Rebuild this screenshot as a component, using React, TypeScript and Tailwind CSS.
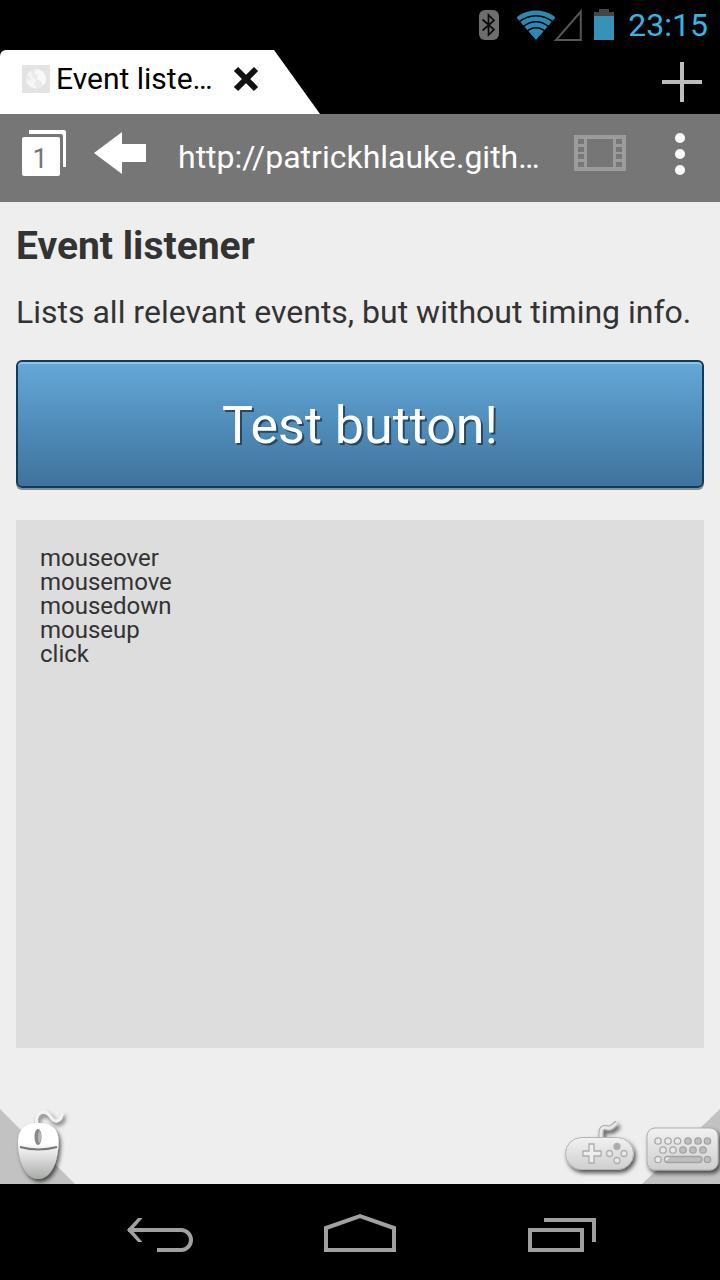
import { useState } from "react";

const EVENTS = ["mouseover", "mousemove", "mousedown", "mouseup", "click"];

function StatusBar() {
  return (
    <header className="flex h-[50px] items-center justify-end pr-3">
      <svg className="h-8 w-5" viewBox="0 0 20 32" aria-label="Bluetooth" role="img">
        <rect x="0" y="1" width="20" height="30" rx="6" fill="#6e6e6e" />
        <path d="M3.500 10.500L15 20.500L9.500 26V6L15 11.500L3.500 21.500" fill="none" stroke="#0a0a0a" strokeWidth="1.700" />
      </svg>
      <svg className="ml-[18px] h-8 w-[38px]" viewBox="0 0 38 32" aria-label="Wi-Fi" role="img">
        <path d="M19 31L-0.500 8.500C10-1 28-1 38.500 8.500Z" fill="#2a8ab4" />
        <g fill="none" stroke="#000" strokeWidth="1.500">
          <path d="M2 13C12 4.500 26 4.500 36 13" />
          <path d="M6 18C14 11 24 11 32 18" />
          <path d="M10 22.500C15 17.500 23 17.500 28 22.500" />
        </g>
      </svg>
      <svg className="-ml-px h-8 w-7" viewBox="0 0 28 32" aria-label="No signal" role="img">
        <path d="M2 31H26.800V2.500Z" fill="none" stroke="#565656" strokeWidth="2" />
      </svg>
      <svg className="ml-3 h-8 w-5" viewBox="0 0 20 32" aria-label="Battery" role="img">
        <path d="M0 3H5V0H15V3H20V7H0Z" fill="#454545" />
        <rect x="0" y="7" width="20" height="24" fill="#3792b8" />
      </svg>
      <time className="ml-3.5 text-[32px] leading-8 text-[#33b5e5]">23:15</time>
    </header>
  );
}

function TabStrip() {
  return (
    <div className="flex h-16 items-stretch justify-between">
      <div className="flex">
        <div className="flex w-[274px] items-center rounded-tl-md bg-white pb-1.5 pl-[22px]">
          <svg className="size-7 shrink-0" viewBox="0 0 28 28" aria-hidden="true">
            <rect width="28" height="28" rx="1" fill="#e3e3e3" />
            <circle cx="14" cy="14" r="10" fill="#ebebeb" />
            <path d="M13 5C18 3 24 8 24 14C24 17 23 19 21 20L19 16L15 14L16 10L13 9Z" fill="#f8f8f8" />
            <path d="M5 9L9 7L10 12L14 15L12 19L15 23C9 24 4 19 4 14L8 16L9 13Z" fill="#f6f6f6" />
          </svg>
          <span className="ml-1.5 grow text-[30px] leading-9 text-black">Event liste…</span>
          <button aria-label="Close tab" className="mr-3.5 flex size-7 items-center justify-center">
            <svg className="size-7" viewBox="0 0 28 28" aria-hidden="true">
              <path d="M4 4L24 24M24 4L4 24" stroke="#111" strokeWidth="6" />
            </svg>
          </button>
        </div>
        <svg className="h-16 w-[46px]" viewBox="0 0 46 64" aria-hidden="true">
          <path d="M0 0L46 64H0Z" fill="#fff" />
        </svg>
      </div>
      <button aria-label="New tab" className="mr-[18px] flex items-center">
        <svg className="size-10" viewBox="0 0 40 40" aria-hidden="true">
          <path d="M20 0V40M0 20H40" stroke="#bdbdbd" strokeWidth="4" />
        </svg>
      </button>
    </div>
  );
}

function Toolbar() {
  return (
    <nav className="flex h-[88px] items-center bg-[#767676] pl-[22px] text-white">
      <button aria-label="Open tabs: 1" className="pb-2.5">
        <svg className="h-12 w-11" viewBox="0 0 44 48" aria-hidden="true">
          <path d="M7 1H42Q44 1 44 3V38H41V7Q41 5 39 5H7Z" fill="#fff" />
          <rect x="0" y="8" width="38" height="39" rx="2" fill="#fff" />
          <text x="18" y="39" textAnchor="middle" fontFamily="Roboto, sans-serif" fontSize="27" fill="#767676">1</text>
        </svg>
      </button>
      <button aria-label="Back" className="ml-7 pb-2.5">
        <svg className="h-11 w-[52px]" viewBox="0 0 52 44" aria-hidden="true">
          <path d="M0 22L28 1V13H52V31H28V43Z" fill="#fff" />
        </svg>
      </button>
      <input
        aria-label="Address"
        defaultValue="http://patrickhlauke.gith…"
        className="ml-8 h-12 min-w-0 flex-1 bg-transparent pb-0.5 text-[32px] outline-none"
      />
      <button aria-label="Video" className="ml-4 pb-2.5">
        <svg className="h-9 w-[52px]" viewBox="0 0 52 36" aria-hidden="true">
          <path
            fillRule="evenodd"
            fill="#9b9b9b"
            d="M0 0H52V36H0ZM13 4V32H39V4ZM4 4V9H10V4ZM4 12V17H10V12ZM4 19V24H10V19ZM4 27V32H10V27ZM42 4V9H48V4ZM42 12V17H48V12ZM42 19V24H48V19ZM42 27V32H48V27Z"
          />
        </svg>
      </button>
      <button aria-label="Menu" className="mr-[34px] ml-12 pb-2">
        <svg className="h-11 w-3" viewBox="0 0 12 44" aria-hidden="true">
          <g fill="#fff">
            <circle cx="6" cy="6" r="5" />
            <circle cx="6" cy="22" r="5" />
            <circle cx="6" cy="38" r="5" />
          </g>
        </svg>
      </button>
    </nav>
  );
}

function Gradients() {
  return (
    <defs>
      <linearGradient id="shell" x1="0" y1="0" x2="0" y2="1">
        <stop offset="0.35" stopColor="#fff" />
        <stop offset="1" stopColor="#a8aba8" />
      </linearGradient>
      <linearGradient id="panel" x1="0" y1="0" x2="0" y2="1">
        <stop offset="0" stopColor="#f1f1f1" />
        <stop offset="1" stopColor="#cfcfcf" />
      </linearGradient>
      <filter id="drop" x="-20%" y="-20%" width="150%" height="150%">
        <feDropShadow dx="2" dy="3" stdDeviation="2" floodColor="#000" floodOpacity="0.65" />
      </filter>
    </defs>
  );
}

function InputTools() {
  return (
    <div className="mt-auto flex items-end">
      <button aria-label="Mouse" className="mr-auto">
        <svg className="h-[78px] w-20" viewBox="0 0 80 78" aria-hidden="true">
          <Gradients />
          <path d="M0 3L75 78H0Z" fill="#c2c2c2" />
          <g filter="url(#drop)">
            <path d="M37 19C35 9 39 6 44 6C51 7 51 15 56 15C60 15 61 12 62 8" fill="none" stroke="#f2f2f2" strokeWidth="3" strokeLinecap="round" />
            <path d="M38 17C50 17 58.500 22 58.500 35C58.500 56 51 73 38 73C26 73 18 56 18 36C18 22 27 17 38 17Z" fill="url(#shell)" />
          </g>
          <path d="M20 41Q38 46 57 41" fill="none" stroke="#777" strokeWidth="2" />
          <ellipse cx="38" cy="31" rx="3.500" ry="8" fill="#898989" />
          <ellipse cx="39.500" cy="31" rx="1.500" ry="6" fill="#b8b8b8" />
        </svg>
      </button>
      <button aria-label="Gamepad">
        <svg className="h-[78px] w-20" viewBox="0 0 80 78" aria-hidden="true">
          <g filter="url(#drop)">
            <path d="M41 33V27C41 21 44 21 48 22C52 23 52 20 57 17" fill="none" stroke="#a8a8a8" strokeWidth="5" />
            <path d="M41 33V27C41 21 44 21 48 22C52 23 52 20 57 17" fill="none" stroke="#e9e9e9" strokeWidth="3" />
            <rect x="5.500" y="31.500" width="68" height="32" rx="16" fill="url(#panel)" stroke="#b5b5b5" />
          </g>
          <path d="M29 38H34V45H41V50H34V57H29V50H23V45H29Z" fill="#eee" stroke="#adadad" strokeWidth="1.300" />
          <g fill="#e8e8e8" stroke="#b0b0b0" strokeWidth="1.300">
            <circle cx="49.500" cy="47.500" r="3" />
            <circle cx="57" cy="40.500" r="3" fill="#aaa" />
            <circle cx="64" cy="47.500" r="3" />
            <circle cx="57" cy="54.500" r="3" />
          </g>
        </svg>
      </button>
      <button aria-label="Keyboard">
        <svg className="h-[78px] w-20" viewBox="0 0 80 78" aria-hidden="true">
          <path d="M2 78L80 3V78Z" fill="#c2c2c2" />
          <rect x="7" y="22" width="71" height="42" rx="8" fill="url(#panel)" stroke="#aeaeae" filter="url(#drop)" />
          <g fill="#e8e8e8" stroke="#a8a8a8" strokeWidth="1.300">
            {[18, 28, 37.5].map((x) => (
              <circle key={x} cx={x} cy="35" r="3.200" />
            ))}
            {[23, 33].map((x) => (
              <circle key={x} cx={x} cy="44" r="3.200" />
            ))}
            <circle cx="18" cy="53.500" r="3.200" />
          </g>
          <g fill="#bebebe" stroke="#a3a3a3" strokeWidth="1.300">
            {[48, 58, 67.5].map((x) => (
              <circle key={x} cx={x} cy="35" r="3.200" />
            ))}
            {[43, 53, 63].map((x) => (
              <circle key={x} cx={x} cy="44" r="3.200" />
            ))}
            <circle cx="67.500" cy="53.500" r="3.200" />
            <rect x="24.500" y="50.500" width="37.500" height="6" rx="3" />
          </g>
          <path d="M25.500 55V53Q25.500 51.500 27 51.500H30Z" fill="#eee" />
        </svg>
      </button>
    </div>
  );
}

function SystemNav() {
  return (
    <nav className="grid h-24 grid-cols-3 items-center justify-items-center px-[60px]">
      <button aria-label="System back">
        <svg className="h-10 w-20" viewBox="0 0 80 40" aria-hidden="true">
          <path d="M8 18H61A10 10 0 0 1 61 38H37" fill="none" stroke="#a1a1a1" strokeWidth="4" />
          <path d="M7 18L18 6H22.500L12 18L22.500 30H18Z" fill="#a1a1a1" />
        </svg>
      </button>
      <button aria-label="Home">
        <svg className="h-10 w-20" viewBox="0 0 80 40" aria-hidden="true">
          <path d="M6 38V16L40 4.200L74 16V38Z" fill="none" stroke="#a1a1a1" strokeWidth="4" />
        </svg>
      </button>
      <button aria-label="Recent apps">
        <svg className="h-10 w-20" viewBox="0 0 80 40" aria-hidden="true">
          <path d="M10 18H62V38H10ZM24 8H74V30" fill="none" stroke="#a1a1a1" strokeWidth="4" />
        </svg>
      </button>
    </nav>
  );
}

export default function App() {
  const [log, setLog] = useState(EVENTS);
  return (
    <div className="flex min-h-screen flex-col bg-black font-[Roboto,sans-serif]">
      <StatusBar />
      <TabStrip />
      <Toolbar />
      <main className="flex flex-1 flex-col bg-[#eee] text-[#333]">
        <div className="flex flex-col px-4 pt-5">
          <h1 className="text-[39px] leading-12 font-bold">Event listener</h1>
          <p className="mt-[22px] text-[32px] leading-10">Lists all relevant events, but without timing info.</p>
          <button
            onClick={() => setLog((lines) => [...lines, "click"])}
            className="mt-7 h-32 rounded-md border-2 border-[#0c3d5d] bg-linear-to-b from-[#64a8d8] via-[#508dba] to-[#3f739b] pt-1 text-[52px] text-white shadow-[0_2px_0_#8c8c8c,inset_0_2px_0_#93c3e4] text-shadow-[2px_2px_0_#234861]"
          >
            Test button!
          </button>
          <output className="mt-8 block min-h-[528px] bg-[#ddd] px-6 pt-[26px] text-[24px] leading-6 whitespace-pre-line">
            {log.join("\n")}
          </output>
        </div>
        <InputTools />
      </main>
      <SystemNav />
    </div>
  );
}
